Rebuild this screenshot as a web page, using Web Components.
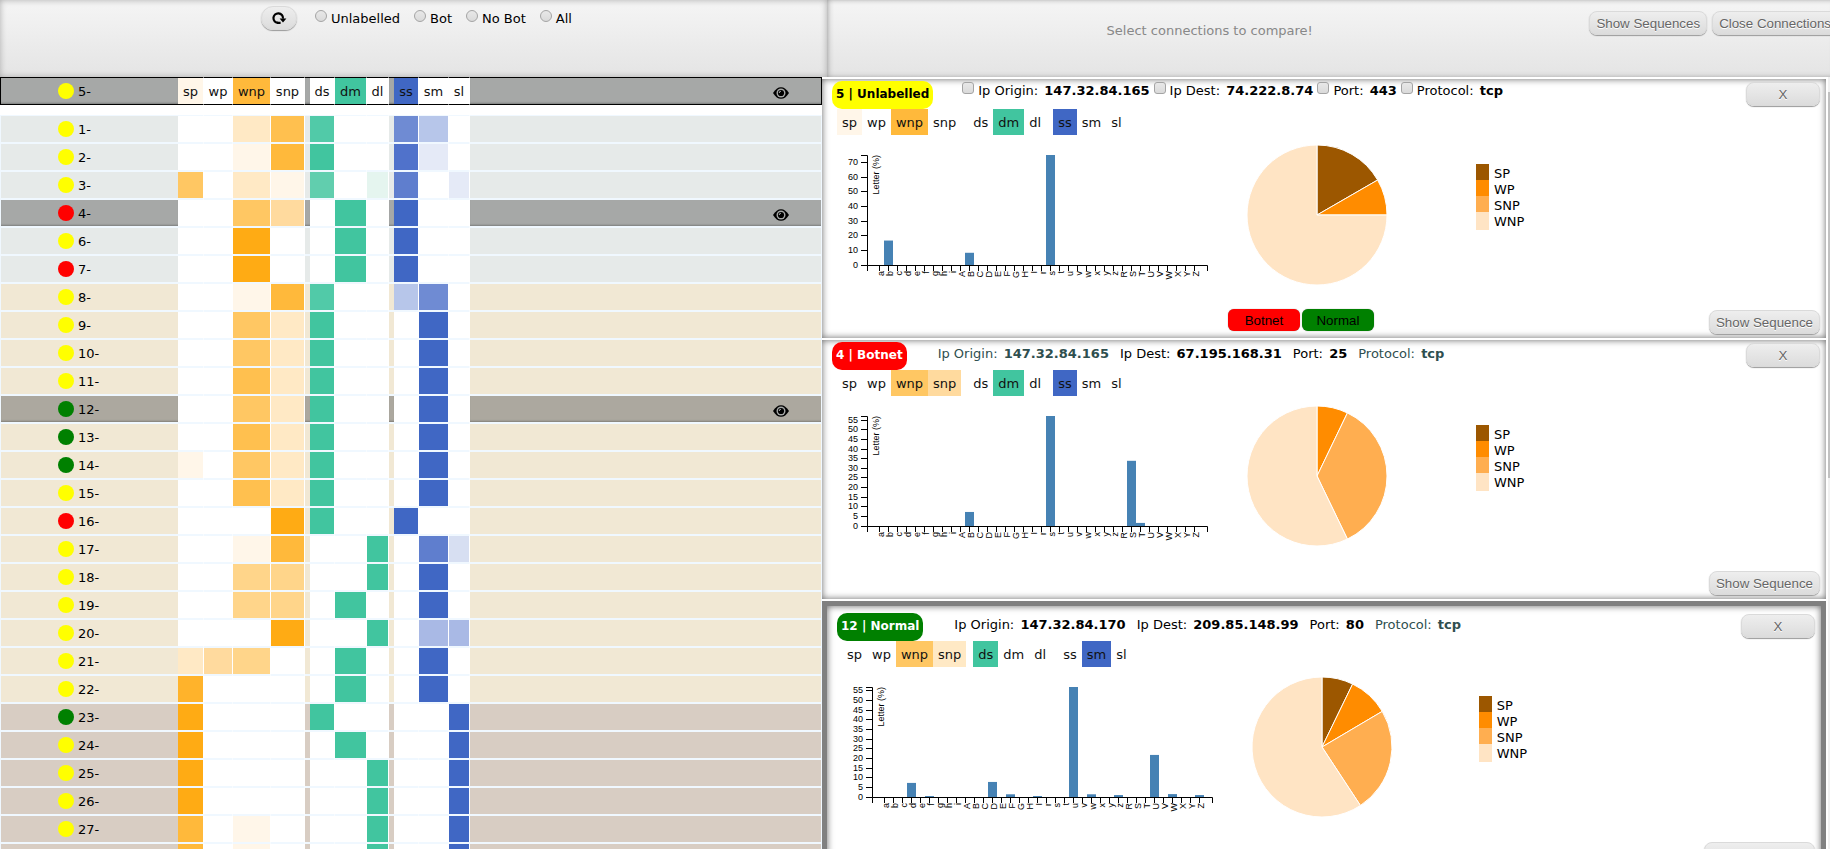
<!DOCTYPE html>
<html lang="en">
<head>
<meta charset="utf-8">
<title>Connections</title>
<style>
html, body { margin: 0; height: 100%; overflow: hidden; background: #fff; }
body { font: 13px/16px "DejaVu Sans", sans-serif; color: #000; }
</style>
</head>
<body>
<connections-app></connections-app>
<script>
const define = (name, html, init) => customElements.define(name, class extends HTMLElement {
  connectedCallback() {
    if (this.shadowRoot) return;
    const t = document.createElement('template');
    t.innerHTML = typeof html === 'function' ? html(this) : html;
    this.attachShadow({ mode: 'open' }).append(t.content.cloneNode(true));
    if (init) init(this);
  }
});

const FEATURES = [['sp', 'wp', 'wnp', 'snp'], ['ds', 'dm', 'dl'], ['ss', 'sm', 'sl']];
const O = '#ffab14', G = '#41c59f', B = '#4067c4';

/* Grey rounded push button; shape="round" gives the pill form */
define('soft-button', `
<style>
  :host { display: inline-block; }
  button { box-sizing: border-box; width: 100%; height: 24px; padding: 0 6px; border: 1px solid #dadada; border-radius: 8px;
    background: linear-gradient(#eee, #dcdcdc); color: #666; font-family: "Liberation Sans", sans-serif; white-space: nowrap;
    box-shadow: 0 1px 1px #999; text-shadow: 0 1px 0 #fff; display: block; }
  :host([shape=round]) button { border-radius: 12px; color: #000; display: flex; align-items: center; justify-content: center; }
  :host([tone=red]) button, :host([tone=green]) button { height: 22px; border-radius: 6px; border: 0; color: #000; text-shadow: none; box-shadow: 0 0 1px #777; }
  :host([tone=red]) button { background: red; }
  :host([tone=green]) button { background: green; }
</style><button type="button"><slot></slot></button>`);

define('filter-bar', `
<style>
  :host { display: flex; box-sizing: border-box; height: 77px; padding: 6px 0 0 261px; overflow: hidden;
    background: linear-gradient(#f5f5f5, #e4e4e4); box-shadow: inset 0 0 6px #aaa; }
  soft-button { width: 36px; }
  svg { display: block; }
  form { display: flex; margin: 2px 0 0 18px; gap: 14px; height: 16px; }
  label { display: flex; gap: 4px; white-space: nowrap; }
  input { appearance: none; box-sizing: border-box; width: 12px; height: 12px; margin: 2px 0 0; border: 1px solid #a4a4a4; border-radius: 50%;
    background: linear-gradient(#e8e8e8, #dadada); }
  span { padding-top: 3px; }
</style>
<soft-button shape="round"><svg width="16" height="14" viewBox="0 0 16 14" role="img" aria-label="Refresh">
  <path d="M7.2 11.9 A4.8 4.8 0 1 1 12 7.6" fill="none" stroke="#000" stroke-width="2.2"/><path d="M6 12.9 H9.6 V10.8 H6 Z M8.6 7.6 H15.4 L12 11.6 Z"/></svg></soft-button>
<form>
  <label><input type="radio" name="f"><span>Unlabelled</span></label>
  <label><input type="radio" name="f"><span>Bot</span></label>
  <label><input type="radio" name="f"><span>No Bot</span></label>
  <label><input type="radio" name="f"><span>All</span></label>
</form>`);

define('compare-bar', `
<style>
  :host { display: flex; box-sizing: border-box; height: 77px; padding-top: 11px; overflow: hidden; gap: 5px;
    background: linear-gradient(#f5f5f5, #e4e4e4); box-shadow: inset 6px 0 6px -6px #888, inset 0 5px 5px -5px #aaa, inset 0 -5px 5px -5px #aaa; }
  p { flex: 1; margin: 0; padding: 12px 0 0 8px; text-align: center; color: #888; }
  soft-button { flex: none; }
  soft-button:last-child { margin-right: -8px; }
</style>
<p>Select connections to compare!</p>
<soft-button>Show Sequences</soft-button>
<soft-button>Close Connections</soft-button>`);

/* Connection list */
const ROWS = [
  [1, 'y', { wnp: '#ffe9c5', snp: '#ffc04f', ds: '#51caa8', ss: '#6f8bd3', sm: '#b7c6ea' }],
  [2, 'y', { wnp: '#fff6e9', snp: '#ffb93b', ds: G, ss: '#5072cb', sm: '#e5eaf7' }],
  [3, 'y', { sp: '#ffc763', wnp: '#ffe9c5', snp: '#fff6e9', ds: '#61ceae', dl: '#e5f5ef', ss: '#5f7ece', sl: '#e5eaf7' }],
  [4, 'r', { wnp: '#ffc763', snp: '#ffda9e', dm: G, ss: B }],
  [6, 'y', { wnp: O, dm: G, ss: B }],
  [7, 'r', { wnp: O, dm: G, ss: B }],
  [8, 'y', { wnp: '#fff6e9', snp: '#ffb93b', ds: '#51caa8', ss: '#b7c6ea', sm: '#6f8bd3' }],
  [9, 'y', { wnp: '#ffc763', snp: '#ffe9c5', ds: G, sm: B }],
  [10, 'y', { wnp: '#ffc763', snp: '#ffe9c5', ds: G, sm: B }],
  [11, 'y', { wnp: '#ffc04f', snp: '#ffe9c5', ds: G, sm: B }],
  [12, 'g', { wnp: '#ffc763', snp: '#ffe9c5', ds: G, sm: B }],
  [13, 'g', { wnp: '#ffc04f', snp: '#ffe9c5', ds: G, sm: B }],
  [14, 'g', { sp: '#fff6e9', wnp: '#ffc763', snp: '#ffe9c5', ds: G, sm: B }],
  [15, 'y', { wnp: '#ffc04f', snp: '#ffe9c5', ds: G, sm: B }],
  [16, 'r', { snp: O, ds: G, ss: B }],
  [17, 'y', { wnp: '#fff6e9', snp: '#ffb93b', dl: G, sm: '#5f7ece', sl: '#d7dff2' }],
  [18, 'y', { wnp: '#ffd58a', snp: '#ffd58a', dl: G, sm: B }],
  [19, 'y', { wnp: '#ffd58a', snp: '#ffd58a', dm: G, sm: B }],
  [20, 'y', { snp: O, dl: G, sm: '#a9b9e5', sl: '#a9b9e5' }],
  [21, 'y', { sp: '#ffe9c5', wp: '#ffda9e', wnp: '#ffd58a', dm: G, sm: B }],
  [22, 'y', { sp: '#ffb32b', dm: G, sm: B }],
  [23, 'g', { sp: O, ds: G, sl: B }],
  [24, 'y', { sp: O, dm: G, sl: B }],
  [25, 'y', { sp: O, dl: G, sl: B }],
  [26, 'y', { sp: O, dl: G, sl: B }],
  [27, 'y', { sp: '#ffb93b', wnp: '#fff6e9', dl: G, sl: B }],
  [28, 'y', { sp: '#ffb93b', wnp: '#fff6e9', dl: G, sl: B }]
];
const DOT = { y: 'yellow', r: 'red', g: 'green' };
const EYE = `<svg width="16" height="12" viewBox="0 0 16 12" role="img" aria-label="Shown"><path d="M0 6 C2.5 2 5 .2 8 .2 S13.5 2 16 6 C13.5 10 11 11.8 8 11.8 S2.5 10 0 6Z"/><circle cx="8" cy="6" r="4.5" fill="#a6a8a7"/><circle cx="8" cy="6" r="3.1"/><path d="M6.2 6 A1.9 1.9 0 0 1 8 4.2" fill="none" stroke="#a6a8a7" stroke-width="1.1"/></svg>`;
const COLS = '<colgroup><col style="width:177px">' +
  [26, 29, 38, 34, 5, 25, 32, 22, 5, 25, 30, 21].map(w => `<col style="width:${w}px">`).join('') + '<col></colgroup>';
const row = ([id, dot, cells], cls, names) => `<tr class="${cls}"><th scope="row"><span class="lab"><i style="background:${DOT[dot]}"></i><span>${id}-</span></span></th>` +
  FEATURES.map(g => g.map(f => `<td class="c" style="background-color:${cells[f] || '#fff'}">${names ? f : ''}</td>`).join('')).join('<td class="s"></td>') +
  `<td class="e">${/sel/.test(cls) ? EYE : ''}</td></tr>`;

define('connection-list', () => `
<style>
  :host { display: block; overflow: hidden; min-width: 0; }
  table { width: 100%; table-layout: fixed; border-spacing: 0; border: 0 solid aliceblue; border-width: 0 1px; --rule: aliceblue; }
  .focus { margin-bottom: 10px; border-color: #000; --rule: #000; }
  td, th { height: 26px; padding: 0; border: 0 solid var(--rule); border-width: 1px 0; text-align: center; font-weight: normal; }
  .c { height: 24px; padding-top: 2px; line-height: 24px; border-right: 1px solid #fff; color: #111; }
  th { text-align: left; }
  .lab { display: flex; align-items: center; gap: 4px; padding-left: 57px; height: 26px; }
  .lab span { padding-top: 2px; }
  i { width: 16px; height: 16px; border-radius: 50%; }
  .e { text-align: right; padding-right: 32px; }
  svg { display: block; margin: 3px 0 0 auto; }
  .a { background: #e6eae9; } .b { background: #f1e8d4; } .d { background: #d8cdc3; }
  .a.sel { background: #a6a8a7; } .b.sel { background: #aca89f; }
  .sel th, .sel .s, .sel .e { box-shadow: inset 0 -2px 2px -1px rgba(0,0,0,.25); }
</style>
<table class="focus">${COLS}<tbody>${row([5, 'y', { sp: '#fff6e9', wnp: '#ffb93b', dm: G, ss: B }], 'a sel', true)}</tbody></table>
<table>${COLS}<tbody>${ROWS.map(r => row(r, (r[0] < 8 ? 'a' : r[0] < 23 ? 'b' : 'd') + (r[0] === 4 || r[0] === 12 ? ' sel' : ''))).join('')}</tbody></table>`);

/* Letter frequency bar chart */
const LETTERS = [...'abcdefghiABCDEFGHIrstuvwxyzRSTUVWXYZ'];
define('letter-chart', el => {
  const bars = JSON.parse(el.getAttribute('bars')), max = +el.getAttribute('max'), step = +el.getAttribute('step');
  const y = v => 118 - 110 * v / max;
  let s = '';
  for (const [l, v] of Object.entries(bars)) s += `<rect x="${43 + 9 * LETTERS.indexOf(l)}" y="${y(v)}" width="9" height="${118 - y(v)}" fill="steelblue"/>`;
  for (let v = 0; v <= max; v += step) {
    const p = Math.floor(y(v)) + .5;
    s += `<path d="M29 ${p}H35"/><text x="26" y="${p + 2.5}" text-anchor="end">${v}</text>`;
  }
  LETTERS.forEach((l, i) => {
    const x = 47.5 + 9 * i;
    s += `<path d="M${x} 118V124"/><text transform="translate(${x + 4.5} 124) rotate(-90)" text-anchor="end">${l}</text>`;
  });
  return `<style>:host { display: block; } svg { display: block; } path { fill: none; stroke: #000; } text { font: 9px "Liberation Sans", sans-serif; fill: #000; }</style>
  <svg width="380" height="140" role="img" aria-label="Letter percentages">${s}
  <path d="M29 8.5H35.5V118.5H29M35.5 124V118.5H375.5V124"/>
  <text transform="translate(47 8) rotate(-90)" text-anchor="end">Letter (%)</text></svg>`;
});

const PIE = ['#9c5700', '#ff8c00', '#ffae50', '#ffe4c4'];
define('share-pie', el => {
  const parts = el.getAttribute('parts').split(',').map(Number);
  const pt = f => `${72 + 70 * Math.sin(f * 2 * Math.PI)} ${72 - 70 * Math.cos(f * 2 * Math.PI)}`;
  let a = 0, s = '';
  parts.forEach((p, i) => {
    const b = a + p / 100;
    if (p) s += `<path d="M72 72L${pt(a)}A70 70 0 ${p > 50 ? 1 : 0} 1 ${pt(b)}Z" fill="${PIE[i]}" stroke="#fff"/>`;
    a = b;
  });
  return `<style>:host, svg { display: block; }</style><svg width="144" height="144" role="img" aria-label="Share by type">${s}</svg>`;
});

define('pie-legend', `
<style>
  :host { display: block; }
  ul { margin: 0; padding: 0; list-style: none; }
  li { display: flex; gap: 5px; height: 16px; line-height: 20px; }
  li::before { content: ""; width: 13px; height: 16px; background: var(--c); }
  li:last-child::before { height: 18px; }
</style>
<ul>${['SP', 'WP', 'SNP', 'WNP'].map((n, i) => `<li style="--c:${PIE[i]}">${n}</li>`).join('')}</ul>`);

/* One connection under comparison */
const CARDS = [
  { tag: '5 | Unlabelled', bg: 'yellow', fg: '#000', pick: true, muted: [],
    info: ['147.32.84.165', '74.222.8.74', '443', 'tcp'],
    chips: { sp: '#fff6e9', wnp: '#ffb93b', dm: G, ss: B },
    bars: { b: 16.67, B: 8.33, s: 75 }, max: 75, step: 10, parts: '16.67,8.33,0,75' },
  { tag: '4 | Botnet', bg: 'red', fg: '#fff', muted: [0, 3],
    info: ['147.32.84.165', '67.195.168.31', '25', 'tcp'],
    chips: { wnp: '#ffc763', snp: '#ffda9e', dm: G, ss: B },
    bars: { B: 7.3, s: 57.2, S: 33.9, T: 1.6 }, max: 57.2, step: 5, parts: '0,7.15,35.7,57.15' },
  { tag: '12 | Normal', bg: 'green', fg: '#fff', muted: [3], current: true,
    info: ['147.32.84.170', '209.85.148.99', '80', 'tcp'],
    chips: { wnp: '#ffc763', snp: '#ffe9c5', ds: G, sm: B },
    bars: { d: 7.3, f: .5, D: 7.8, F: 1.4, I: .5, u: 57, w: 1.4, z: 1, U: 21.8, W: 1.5, Z: 1 }, max: 57, step: 5, parts: '7.2,9.3,24.25,59.25' }
];
const NAMES = ['Ip Origin:', 'Ip Dest:', 'Port:', 'Protocol:'];

define('connection-card', el => {
  const c = CARDS[el.getAttribute('index')];
  return `
<style>
  :host { display: block; padding: 2px 6px 3px 10px; background: #fff; box-shadow: inset 0 0 7px #666; }
  :host([current]) { border: 5px solid gray; padding-top: 7px; }
  header { display: flex; height: 28px; align-items: flex-start; }
  h2 { margin: 0 31px 0 0; padding: 0 4px; border-radius: 10px; font-size: 12px; line-height: 26px; height: 28px; background: ${c.bg}; color: ${c.fg}; }
  .info { display: flex; flex: 1; gap: 11px; padding-top: 4px; white-space: pre; }
  .info.pick { gap: 4px; padding-top: 1px; margin-left: -2px; }
  .pick span { padding-top: 1px; }
  b { margin-left: 2px; }
  label { display: flex; gap: 4px; }
  input { appearance: none; box-sizing: border-box; width: 12px; height: 12px; margin: 0; border: 1px solid #a4a4a4; border-radius: 3px; background: linear-gradient(#e8e8e8, #dadada); }
  .muted { color: darkslategray; }
  header soft-button { width: 74px; margin-top: 1px; }
  .chips { display: flex; gap: 7px; padding-left: 5px; line-height: 24px; }
  .chips div { display: flex; }
  .chips span { padding: 2px 5px 0; color: #111; }
  .body { display: grid; grid-template-columns: auto auto 5fr auto 17fr; height: 174px; }
  letter-chart { margin-top: 12px; }
  share-pie { margin: 8px 0 0 33px; }
  pie-legend { grid-column: 4; margin-top: 29px; }
  footer { display: grid; grid-template-columns: 13fr auto 11fr auto; height: 26px; }
  .marks { grid-column: 2; display: flex; gap: 2px; min-width: 146px; }
  .marks soft-button { width: 72px; }
  footer > soft-button { grid-column: 4; margin-top: 1px; }
</style>
<header><h2>${c.tag}</h2>
<div class="info ${c.pick ? 'pick' : ''}">${c.info.map((v, i) => c.pick
    ? `<label><input type="checkbox"><span>${NAMES[i]} <b>${v}</b></span></label>`
    : `<span class="${c.muted.includes(i) ? 'muted' : ''}">${NAMES[i]} <b>${v}</b></span>`).join('')}</div>
<soft-button>X</soft-button></header>
<div class="chips">${FEATURES.map(g => `<div>${g.map(f => `<span style="background:${c.chips[f] || 'none'}">${f}</span>`).join('')}</div>`).join('')}</div>
<div class="body"><letter-chart bars='${JSON.stringify(c.bars)}' max="${c.max}" step="${c.step}"></letter-chart><share-pie parts="${c.parts}"></share-pie><pie-legend></pie-legend></div>
<footer><div class="marks">${c.pick ? '<soft-button tone="red">Botnet</soft-button><soft-button tone="green">Normal</soft-button>' : ''}</div><soft-button>Show Sequence</soft-button></footer>`;
});

define('compare-panel', `
<style>
  :host { display: flex; gap: 2px; overflow: hidden; min-width: 0; }
  .list { flex: 1; min-width: 0; display: flex; flex-direction: column; gap: 2px; padding-top: 2px; }
  .list ::slotted(*) { flex: none; }
  .bar { width: 2px; padding-top: 15px; background: #f1f1f1; }
  .thumb { height: 51%; background: #c1c1c1; }
</style>
<div class="list"><slot></slot></div>
<div class="bar"><div class="thumb"></div></div>`);

define('connections-app', `
<style>
  :host { display: grid; grid-template-rows: auto 1fr; height: 100vh; }
  .top { display: grid; grid-template-columns: minmax(0, 827fr) minmax(0, 1003fr); }
  .main { display: grid; grid-template-columns: minmax(0, 137fr) minmax(0, 168fr); grid-template-rows: minmax(0, 1fr); min-height: 0; }
</style>
<div class="top"><filter-bar></filter-bar><compare-bar></compare-bar></div>
<div class="main"><connection-list></connection-list>
<compare-panel><connection-card index="0"></connection-card><connection-card index="1"></connection-card><connection-card index="2" current></connection-card></compare-panel></div>`);
</script>
</body>
</html>
